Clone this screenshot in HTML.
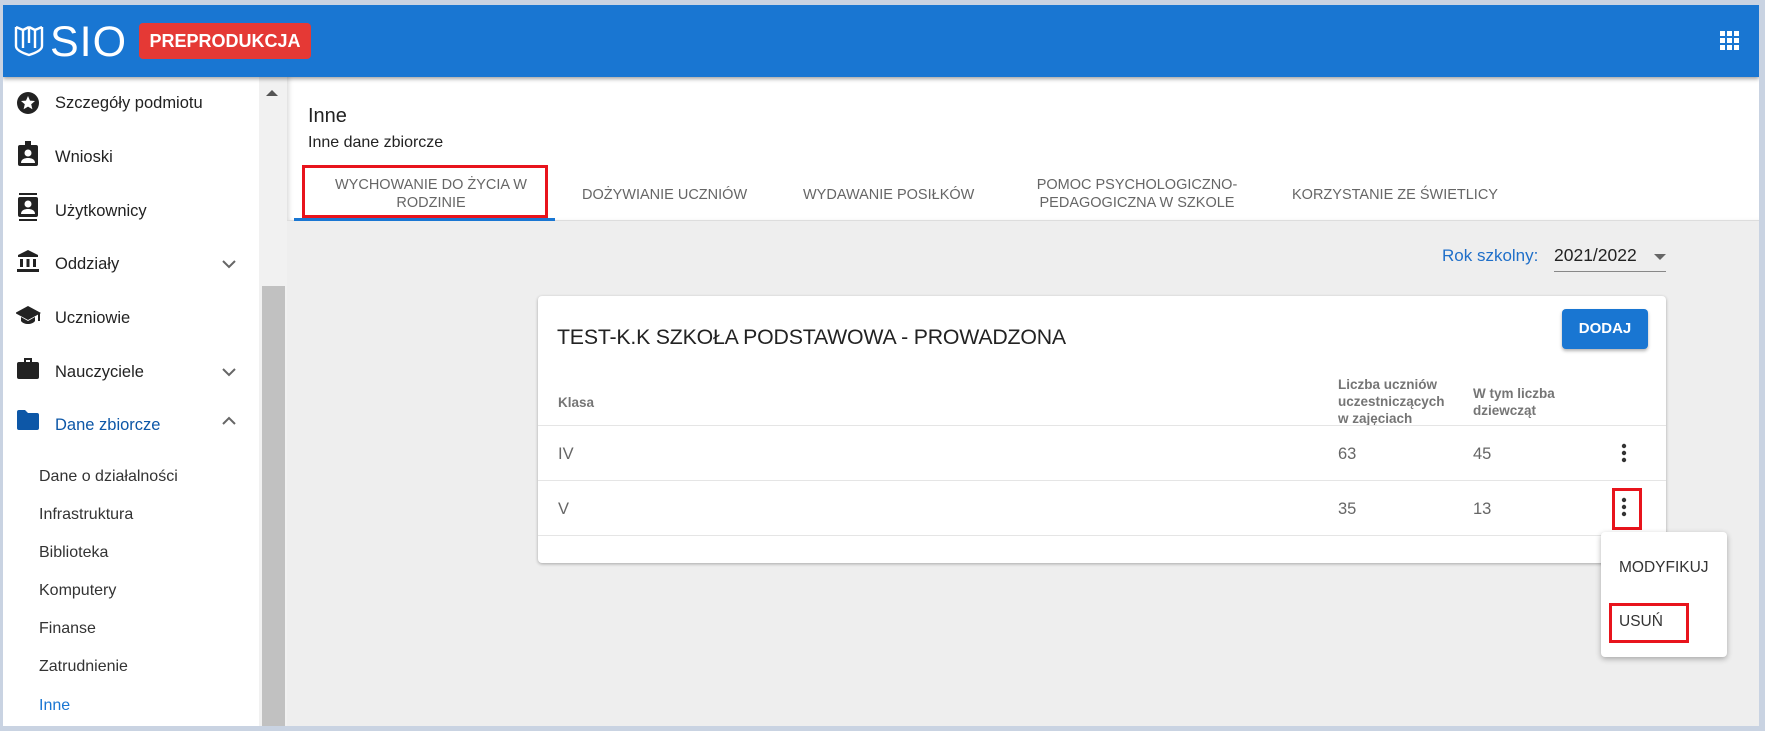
<!DOCTYPE html>
<html><head><meta charset="utf-8">
<style>
*{margin:0;padding:0;box-sizing:border-box}
body{width:1765px;height:731px;overflow:hidden;background:#c9d3e2;font-family:"Liberation Sans",sans-serif;position:relative}
.abs{position:absolute}
#frame{left:3px;top:5px;width:1756px;height:721px;background:#eeeeee;overflow:hidden}
#hdr{left:0;top:0;width:1756px;height:72px;background:#1976d2;box-shadow:0 2px 4px rgba(0,0,0,.35);z-index:5}
#side{left:0;top:72px;width:256px;height:660px;background:#fff}
.it{position:absolute;left:52px;font-size:16.5px;color:#222;white-space:nowrap}
.sub{position:absolute;left:36px;font-size:16px;color:#333;white-space:nowrap}
.ic{position:absolute;left:13px}
.chev{position:absolute;left:219px}
#track{left:256px;top:72px;width:28px;height:660px;background:#f1f1f1}
#thumb{left:259px;top:281px;width:23px;height:450px;background:#c1c1c1}
#top{left:284px;top:72px;width:1472px;height:144px;background:#fff;border-bottom:1px solid #ddd;box-shadow:inset 4px 0 5px -2px rgba(0,0,0,.15)}
.tab{position:absolute;font-size:14.5px;color:#666;text-align:center;line-height:18px;white-space:nowrap}
.card{left:535px;top:291px;width:1128px;height:267px;background:#fff;border-radius:4px;box-shadow:0 1px 3px rgba(0,0,0,.3)}
.th{position:absolute;font-size:13.5px;font-weight:bold;color:#757575;line-height:17px}
.td{position:absolute;font-size:16.5px;color:#666}
.line{position:absolute;left:0;width:1128px;height:1px;background:#e5e5e5}
.redbox{position:absolute;border:3px solid #e8141c}
</style></head><body>
<div id="frame" class="abs">
<div id="hdr" class="abs">
 <svg class="abs" style="left:11px;top:19px" width="30" height="33" viewBox="0 0 30 33"><path d="M2 3 V22 Q2 27 15 31 Q28 27 28 22 V3 M2 3 L9 6 L15 3 M9 6 V24 M15 3 V19 M28 3 L21 6 L15 3 M21 6 V24" fill="none" stroke="#fff" stroke-width="2.4" stroke-linejoin="round"/></svg>
 <div class="abs" style="left:47px;top:13px;font-size:43px;color:#fff;letter-spacing:1px;line-height:48px">SIO</div>
 <div class="abs" style="left:136px;top:18px;width:172px;height:36px;background:#e53935;border-radius:4px;color:#fff;font-size:18px;font-weight:bold;line-height:36px;text-align:center">PREPRODUKCJA</div>
 <svg class="abs" style="left:1717px;top:26px" width="20" height="20" viewBox="0 0 20 20" fill="#fff"><rect x="0" y="0" width="5" height="5"/><rect x="7" y="0" width="5" height="5"/><rect x="14" y="0" width="5" height="5"/><rect x="0" y="7" width="5" height="5"/><rect x="7" y="7" width="5" height="5"/><rect x="14" y="7" width="5" height="5"/><rect x="0" y="14" width="5" height="5"/><rect x="7" y="14" width="5" height="5"/><rect x="14" y="14" width="5" height="5"/></svg>
</div>
<div id="side" class="abs">
 <svg class="ic" style="top:14px" width="24" height="24" viewBox="0 0 24 24"><circle cx="12" cy="12" r="11" fill="#222"/><path d="M12 5l2 4.6 5 .4-3.8 3.3 1.2 4.9L12 15.6 7.6 18.2l1.2-4.9L5 10l5-.4z" fill="#fff"/></svg>
 <div class="it" style="top:17px">Szczegóły podmiotu</div>
 <svg class="ic" style="top:64px" width="24" height="26" viewBox="0 0 24 26"><rect x="2" y="4" width="20" height="21" rx="2" fill="#222"/><rect x="9" y="0" width="6" height="6" fill="#222"/><circle cx="12" cy="12" r="3.5" fill="#fff"/><path d="M5 22c0-4 4-5 7-5s7 1 7 5z" fill="#fff"/></svg>
 <div class="it" style="top:71px">Wnioski</div>
 <svg class="ic" style="top:116px" width="24" height="28" viewBox="0 0 24 28"><rect x="3" y="0" width="18" height="2" fill="#222"/><rect x="3" y="26" width="18" height="2" fill="#222"/><rect x="2" y="4" width="20" height="20" rx="2" fill="#222"/><circle cx="12" cy="11" r="3.5" fill="#fff"/><path d="M5 21c0-4 4-5 7-5s7 1 7 5z" fill="#fff"/></svg>
 <div class="it" style="top:125px">Użytkownicy</div>
 <svg class="ic" style="top:172px" width="24" height="24" viewBox="0 0 24 24" fill="#222"><path d="M12 1 L22 6 V8 H2 V6z"/><rect x="4" y="10" width="3" height="8"/><rect x="10.5" y="10" width="3" height="8"/><rect x="17" y="10" width="3" height="8"/><rect x="1" y="20" width="22" height="3"/></svg>
 <div class="it" style="top:178px">Oddziały</div>
 <svg class="chev" style="top:183px" width="14" height="9" viewBox="0 0 14 9"><path d="M1 1l6 6 6-6" fill="none" stroke="#666" stroke-width="2"/></svg>
 <svg class="ic" style="top:229px" width="26" height="20" viewBox="0 0 26 20" fill="#222"><path d="M12 0 L25 7 L12 14 L-1 7z"/><path d="M5 11v4c3 4 11 4 14 0v-4l-7 4z"/><rect x="22" y="7" width="2" height="8"/></svg>
 <div class="it" style="top:232px">Uczniowie</div>
 <svg class="ic" style="top:279px" width="24" height="24" viewBox="0 0 24 24" fill="#222"><rect x="1" y="6" width="22" height="17" rx="2"/><path d="M8 6V2h8v4h-2V4h-4v2z"/></svg>
 <div class="it" style="top:286px">Nauczyciele</div>
 <svg class="chev" style="top:291px" width="14" height="9" viewBox="0 0 14 9"><path d="M1 1l6 6 6-6" fill="none" stroke="#666" stroke-width="2"/></svg>
 <svg class="ic" style="top:333px" width="24" height="20" viewBox="0 0 24 20" fill="#0d57a7"><path d="M1 2a2 2 0 012-2h6l3 3h9a2 2 0 012 2v13a2 2 0 01-2 2H3a2 2 0 01-2-2z"/></svg>
 <div class="it" style="top:339px;color:#0d57a7">Dane zbiorcze</div>
 <svg class="chev" style="top:339px" width="14" height="9" viewBox="0 0 14 9"><path d="M1 8l6-6 6 6" fill="none" stroke="#666" stroke-width="2"/></svg>
 <div class="sub" style="top:391px">Dane o działalności</div>
 <div class="sub" style="top:429px">Infrastruktura</div>
 <div class="sub" style="top:467px">Biblioteka</div>
 <div class="sub" style="top:505px">Komputery</div>
 <div class="sub" style="top:543px">Finanse</div>
 <div class="sub" style="top:581px">Zatrudnienie</div>
 <div class="sub" style="top:620px;color:#1976d2">Inne</div>
</div>
<div id="track" class="abs"></div>
<div id="thumb" class="abs"></div>
<svg class="abs" style="left:262px;top:84px" width="14" height="8" viewBox="0 0 14 8"><path d="M1 7l6-6 6 6z" fill="#555"/></svg>
<div id="top" class="abs">
 <div class="abs" style="left:21px;top:28px;font-size:20px;color:#222">Inne</div>
 <div class="abs" style="left:21px;top:57px;font-size:16px;color:#222">Inne dane zbiorcze</div>
 <div class="tab" style="left:20px;top:99px;width:248px">WYCHOWANIE DO ŻYCIA W<br>RODZINIE</div>
 <div class="abs" style="left:7px;top:141px;width:261px;height:3px;background:#1976d2"></div>
 <div class="redbox" style="left:15px;top:88px;width:246px;height:53px"></div>
 <div class="tab" style="left:295px;top:109px">DOŻYWIANIE UCZNIÓW</div>
 <div class="tab" style="left:516px;top:109px">WYDAWANIE POSIŁKÓW</div>
 <div class="tab" style="left:740px;top:99px;width:220px">POMOC PSYCHOLOGICZNO-<br>PEDAGOGICZNA W SZKOLE</div>
 <div class="tab" style="left:1005px;top:109px">KORZYSTANIE ZE ŚWIETLICY</div>
</div>
<div class="abs" style="left:1439px;top:241px;font-size:17px;color:#1f6fc9">Rok szkolny:</div>
<div class="abs" style="left:1551px;top:240px;font-size:17.5px;color:#222">2021/2022</div>
<svg class="abs" style="left:1651px;top:249px" width="12" height="6"><path d="M0 0h12L6 6z" fill="#666"/></svg>
<div class="abs" style="left:1551px;top:266px;width:112px;height:1px;background:#888"></div>
<div class="card abs">
 <div class="abs" style="left:19px;top:29px;font-size:21.3px;color:#222;letter-spacing:-0.2px;white-space:nowrap">TEST-K.K SZKOŁA PODSTAWOWA - PROWADZONA</div>
 <div class="abs" style="left:1024px;top:13px;width:86px;height:40px;background:#1976d2;border-radius:4px;box-shadow:0 2px 3px rgba(0,0,0,.3);color:#fff;font-weight:bold;font-size:15px;line-height:40px;text-align:center">DODAJ</div>
 <div class="th" style="left:20px;top:98px">Klasa</div>
 <div class="th" style="left:800px;top:80px">Liczba uczniów<br>uczestniczących<br>w zajęciach</div>
 <div class="th" style="left:935px;top:89px">W tym liczba<br>dziewcząt</div>
 <div class="line" style="top:129px"></div>
 <div class="td" style="left:20px;top:149px">IV</div>
 <div class="td" style="left:800px;top:149px">63</div>
 <div class="td" style="left:935px;top:149px">45</div>
 <svg class="abs" style="left:1083px;top:147px" width="6" height="20" fill="#333"><circle cx="3" cy="3" r="2.2"/><circle cx="3" cy="10" r="2.2"/><circle cx="3" cy="17" r="2.2"/></svg>
 <div class="line" style="top:184px"></div>
 <div class="td" style="left:20px;top:204px">V</div>
 <div class="td" style="left:800px;top:204px">35</div>
 <div class="td" style="left:935px;top:204px">13</div>
 <svg class="abs" style="left:1083px;top:201px" width="6" height="20" fill="#333"><circle cx="3" cy="3" r="2.2"/><circle cx="3" cy="10" r="2.2"/><circle cx="3" cy="17" r="2.2"/></svg>
 <div class="redbox" style="left:1074px;top:192px;width:30px;height:42px"></div>
 <div class="line" style="top:239px"></div>
</div>
<div class="abs" style="left:1598px;top:527px;width:126px;height:125px;background:#fff;border-radius:4px;box-shadow:0 2px 6px rgba(0,0,0,.3)">
 <div class="abs" style="left:18px;top:27px;font-size:15.5px;color:#333">MODYFIKUJ</div>
 <div class="abs" style="left:18px;top:81px;font-size:15.5px;color:#333">USUŃ</div>
 <div class="redbox" style="left:8px;top:71px;width:80px;height:40px"></div>
</div>
</div>
</body></html>
